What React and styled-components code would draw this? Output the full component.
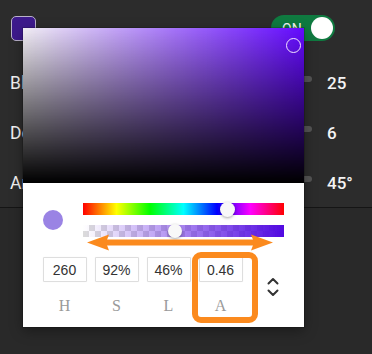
import React from "react";
import styled, { createGlobalStyle } from "styled-components";

const Global = createGlobalStyle`
  html, body { margin: 0; padding: 0; background: #2b2b2b; }
  body { font-family: Roboto, "Liberation Sans", sans-serif; }
  * { box-sizing: border-box; }
`;

const Page = styled.div`
  position: relative;
  width: 372px;
  height: 354px;
  overflow: hidden;
  background: #292929;
`;

const Settings = styled.div`
  height: 207px;
  padding: 15px 0 0 10px;
  background: #2c2c2c;
`;

const HeaderRow = styled.div`
  display: flex;
  align-items: center;
  justify-content: space-between;
  padding: 0 37px 0 1px;
  height: 26px;
  margin-bottom: 17px;
`;

const Swatch = styled.div`
  width: 25px;
  height: 25px;
  border-radius: 5px;
  background: #3d1a8c;
  border: 1.5px solid #b9b1c9;
`;

const Toggle = styled.div`
  display: flex;
  align-items: center;
  justify-content: space-between;
  width: 64px;
  height: 26px;
  padding: 0 2px 0 11px;
  border-radius: 13px;
  background: #0f7a40;
  color: #f4f4f4;
  font-size: 14px;
  font-weight: 400;
`;

const ToggleText = styled.span`
  transform: translateY(1px);
`;

const Knob = styled.span`
  width: 22px;
  height: 22px;
  border-radius: 50%;
  background: #fff;
`;

const SliderRow = styled.div`
  display: grid;
  grid-template-columns: 60px 1fr 45px;
  align-items: center;
  height: 50px;
`;

const RowLabel = styled.span`
  font-size: 17.5px;
  color: #f2f2f2;
`;

const Track = styled.div`
  height: 6px;
  margin: 0 15px 0 20px;
  border-radius: 3px;
  background: #555;
  transform: translateY(-4px);
`;

const RowValue = styled.span`
  font-size: 17px;
  font-weight: 500;
  color: #f4f4f4;
`;

const Divider = styled.div`
  height: 1px;
  background: #151515;
`;

const Popover = styled.div`
  position: absolute;
  left: 22.5px;
  top: 28px;
  width: 281.5px;
  height: 299px;
  background: #fff;
  box-shadow: 0 0 0 1px rgba(0, 0, 0, 0.15), 0 4px 12px rgba(0, 0, 0, 0.35);
`;

const Saturation = styled.div`
  position: relative;
  height: 155px;
  background:
    linear-gradient(to top, #000, rgba(0, 0, 0, 0)),
    linear-gradient(to right, #f1eef4, rgba(255, 255, 255, 0)),
    hsl(262, 100%, 52%);
`;

const SatPointer = styled.div`
  position: absolute;
  width: 15px;
  height: 15px;
  margin: -7.5px 0 0 -7.5px;
  border-radius: 50%;
  border: 1.5px solid #f3e6ff;
`;

const Controls = styled.div`
  padding: 20px 20px 0 20px;
`;

const TopRow = styled.div`
  display: flex;
  align-items: center;
  gap: 20px;
`;

const Preview = styled.div`
  width: 20px;
  height: 20px;
  border-radius: 50%;
  background: #9a83e4;
`;

const Bars = styled.div`
  flex: 1;
  display: flex;
  flex-direction: column;
  gap: 10px;
`;

const Bar = styled.div`
  position: relative;
  height: 12px;
  background: ${(p) => p.$bg};
`;

const Thumb = styled.div`
  position: absolute;
  top: 50%;
  width: ${(p) => p.$size}px;
  height: ${(p) => p.$size}px;
  margin-left: ${(p) => -p.$size / 2}px;
  margin-top: ${(p) => -p.$size / 2}px;
  border-radius: 50%;
  background: #f8f8f8;
  box-shadow: 0 1px 3px rgba(0, 0, 0, 0.35);
`;

const FieldsRow = styled.div`
  display: flex;
  align-items: flex-start;
  margin-top: 20px;
`;

const Fields = styled.div`
  display: grid;
  grid-template-columns: repeat(4, 44px);
  column-gap: 8px;
`;

const Field = styled.div`
  display: flex;
  flex-direction: column;
  align-items: center;
`;

const Input = styled.input`
  width: 44px;
  height: 25px;
  padding: 0;
  border: 1px solid #dedede;
  border-radius: 1px;
  box-shadow: 0 0 1px rgba(0, 0, 0, 0.08);
  text-align: center;
  font-family: "Liberation Sans", Arial, sans-serif;
  font-size: 14px;
  color: #333;
  outline: none;
  background: #fff;
`;

const FieldLabel = styled.span`
  margin-top: 15px;
  line-height: 18px;
  font-family: "Liberation Serif", "Times New Roman", serif;
  font-size: 16px;
  color: #9a9a9a;
`;

const Stepper = styled.div`
  margin: 20px 0 0 24px;
  width: 12px;
  height: 20px;
  display: flex;
`;

const ArrowOverlay = styled.svg`
  position: absolute;
  left: 64.5px;
  top: 206px;
`;

const Highlight = styled.div`
  position: absolute;
  left: 169.5px;
  top: 224px;
  width: 66px;
  height: 71px;
  border: 6.5px solid #fb8a1e;
  border-radius: 9px;
`;

const hueGradient =
  "linear-gradient(to right, #f00 0%, #ff0 16.66%, #0f0 33.33%, #0ff 50%, #00f 66.66%, #f0f 83.33%, #f00 100%)";
const alphaBg =
  "linear-gradient(to right, rgba(81, 9, 225, 0), rgb(81, 9, 225)), repeating-conic-gradient(#dcdcdc 0% 25%, #fff 0% 50%) 0 0 / 12px 12px";

const rows = [
  { label: "Blur", value: "25" },
  { label: "Depth", value: "6" },
  { label: "Angle", value: "45°" },
];

const fields = [
  { label: "H", value: "260" },
  { label: "S", value: "92%" },
  { label: "L", value: "46%" },
  { label: "A", value: "0.46" },
];

export default function App() {
  return (
    <Page>
      <Global />
      <Settings>
        <HeaderRow>
          <Swatch />
          <Toggle>
            <ToggleText>ON</ToggleText>
            <Knob />
          </Toggle>
        </HeaderRow>
        {rows.map((r) => (
          <SliderRow key={r.label}>
            <RowLabel>{r.label}</RowLabel>
            <Track />
            <RowValue>{r.value}</RowValue>
          </SliderRow>
        ))}
      </Settings>
      <Divider />
      <Popover>
        <Saturation>
          <SatPointer style={{ left: "96.3%", top: "11%" }} />
        </Saturation>
        <Controls>
          <TopRow>
            <Preview />
            <Bars>
              <Bar $bg={hueGradient}>
                <Thumb $size={15} style={{ left: "72.2%" }} />
              </Bar>
              <Bar $bg={alphaBg}>
                <Thumb $size={14} style={{ left: "46%" }} />
              </Bar>
            </Bars>
          </TopRow>
          <FieldsRow>
            <Fields>
              {fields.map((f) => (
                <Field key={f.label}>
                  <Input readOnly value={f.value} />
                  <FieldLabel>{f.label}</FieldLabel>
                </Field>
              ))}
            </Fields>
            <Stepper>
              <svg width="12" height="20" viewBox="0 0 12 20" fill="none" stroke="#333" strokeWidth="2" strokeLinecap="round" strokeLinejoin="round">
                <path d="M1.5 6.5 L6 2 L10.5 6.5" />
                <path d="M1.5 13.5 L6 18 L10.5 13.5" />
              </svg>
            </Stepper>
          </FieldsRow>
        </Controls>
        <ArrowOverlay width="186" height="17" viewBox="0 0 186 17">
          <rect x="18" y="5.5" width="150" height="6" fill="#fb8a1e" />
          <polygon points="0,8.5 22,0.5 19,8.5 22,16.5" fill="#fb8a1e" />
          <polygon points="186,8.5 164,0.5 167,8.5 164,16.5" fill="#fb8a1e" />
        </ArrowOverlay>
        <Highlight />
      </Popover>
    </Page>
  );
}
